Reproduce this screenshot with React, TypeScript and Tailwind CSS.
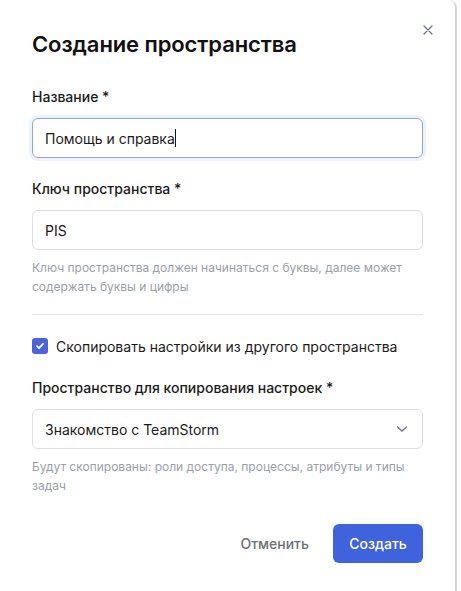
import React from "react";

export default function App() {
  return (
    <div className="w-[461px] h-[591px] bg-white flex" style={{ fontFamily: "Inter, 'Noto Sans', sans-serif" }}>
      <div className="relative w-[457px] h-full bg-white border-r-2 border-[#d4d4d4] rounded-tr-[8px] px-8 pt-[29px]">
        <button className="absolute right-[22px] top-[25px] text-[#6b7280]">
          <svg width="10" height="10" viewBox="0 0 10 10" fill="none" stroke="currentColor" strokeWidth="1.3" strokeLinecap="round">
            <path d="M1 1l8 8M9 1l-8 8" />
          </svg>
        </button>
        <h1 className="text-[22px] font-semibold text-[#111] leading-[30px] tracking-[-0.1px]">Создание пространства</h1>

        <div className="mt-[28px] text-[14px] font-medium text-[#1a1a1a] leading-[20px]">Название *</div>
        <div className="mt-[11px] h-[40px] rounded-[6px] border border-[#8fa2ee] ring-[3px] ring-[#eef2fd] flex items-center px-3 text-[14px] text-[#1a1a1a]">
          Помощь и справка<span className="inline-block w-px h-[18px] bg-[#111]" />
        </div>

        <div className="mt-[21px] text-[14px] font-medium text-[#1a1a1a] leading-[20px]">Ключ пространства *</div>
        <div className="mt-[11px] h-[40px] rounded-[6px] border border-[#dedede] flex items-center px-3 text-[14px] text-[#1a1a1a]">
          PIS
        </div>
        <div className="mt-[8px] text-[12px] leading-[19px] text-[#9aa0a8]">
          Ключ пространства должен начинаться с буквы, далее может содержать буквы и цифры
        </div>

        <div className="mt-[18px] h-px bg-[#e3e3e3]" />

        <div className="mt-[21px] flex items-center gap-2 h-[20px]">
          <div className="w-4 h-4 rounded-[3px] bg-[#4a63dc] flex items-center justify-center">
            <svg width="10" height="10" viewBox="0 0 10 10" fill="none" stroke="white" strokeWidth="1.8" strokeLinecap="round" strokeLinejoin="round">
              <path d="M2 5.2l2 2 4-4.4" />
            </svg>
          </div>
          <span className="text-[14px] text-[#1a1a1a]">Скопировать настройки из другого пространства</span>
        </div>

        <div className="mt-[22px] text-[14px] font-medium text-[#1a1a1a] leading-[20px]">Пространство для копирования настроек *</div>
        <div className="mt-[11px] h-[40px] rounded-[6px] border border-[#dedede] flex items-center justify-between pl-3 pr-[14px] text-[14px] text-[#1a1a1a]">
          <span>Знакомство с TeamStorm</span>
          <svg width="12" height="8" viewBox="0 0 12 8" fill="none" stroke="#6b7280" strokeWidth="1.4" strokeLinecap="round" strokeLinejoin="round">
            <path d="M1.5 2l4.5 4 4.5-4" />
          </svg>
        </div>
        <div className="mt-[8px] text-[12px] leading-[19px] text-[#9aa0a8]">
          Будут скопированы: роли доступа, процессы, атрибуты и типы задач
        </div>

        <div className="mt-[29px] flex justify-end items-center gap-6">
          <button className="text-[14px] font-medium text-[#6b6f76]">Отменить</button>
          <button className="h-[39px] w-[90px] rounded-[6px] bg-[#3f62dd] text-white text-[14px] font-medium">Создать</button>
        </div>
      </div>
    </div>
  );
}
